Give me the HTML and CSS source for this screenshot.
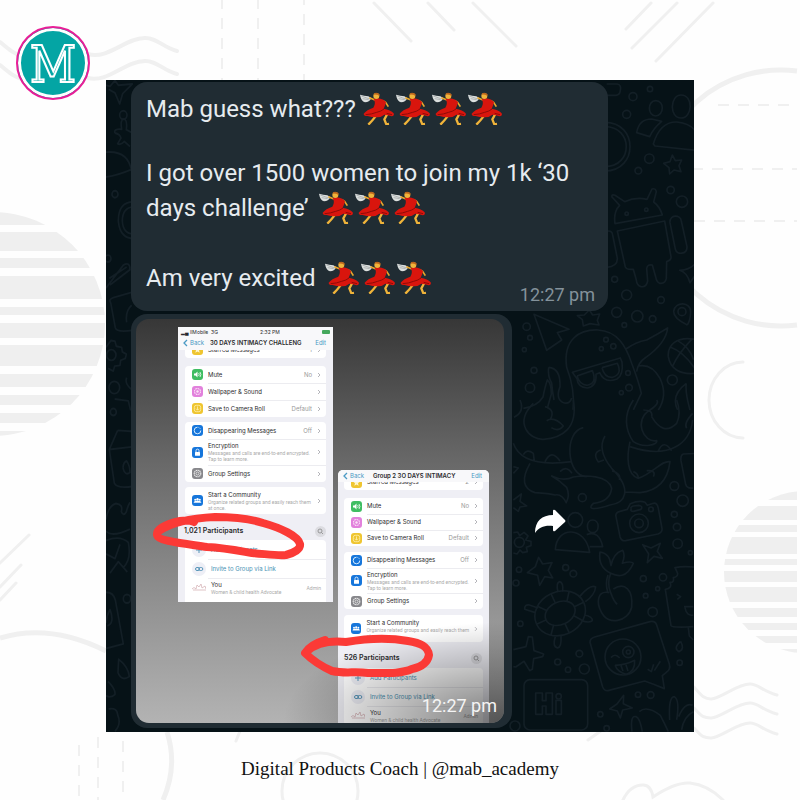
FILE: index.html
```html
<!DOCTYPE html>
<html lang="en">
<head>
<meta charset="utf-8">
<meta name="viewport" content="width=device-width, initial-scale=1">
<title>Digital Products Coach</title>
<link rel="stylesheet" href="styles.css">
</head>
<body>
<svg class="symbols" aria-hidden="true">
  <symbol id="dancer" viewBox="56 38 108 99">
    <path d="M59 46 Q72 50 84 51 L93 56 Q87 69 74 69 Q62 65 59 46Z" fill="#dce0df"/>
    <path d="M63 50 L88 59 M67 58 L85 61" stroke="#9a9f9f" stroke-width="2"/>
    <path d="M87 55 L104 62 M128 64 L136 69 L144 82" fill="none" stroke="#e9a82c" stroke-width="5" stroke-linejoin="round"/>
    <path d="M108 108 Q96 124 84 136 M141 104 L132 120 L138 135 L146 134" fill="none" stroke="#f0b43a" stroke-width="7" stroke-linejoin="round"/>
    <path d="M100 59 Q114 53 129 61 L137 68 Q135 79 130 88 Q151 91 160 102 Q163 110 154 111 Q142 107 132 106 Q121 115 108 114 Q92 114 82 110 Q70 111 70 103 Q79 91 99 85 Q108 72 100 59Z" fill="#d9150d"/>
    <path d="M76 106 Q94 105 109 99 Q123 96 131 89 M139 102 L155 106" fill="none" stroke="#8f0b08" stroke-width="3"/>
    <circle cx="108" cy="50" r="9" fill="#f1b43b"/>
    <path d="M100 43 Q109 37 118 45 L117 50 Q111 45 101 46Z" fill="#bb641b"/>
  </symbol>
  <symbol id="chevron" viewBox="0 0 4 6"><path d="M1 1 L3 3 L1 5" fill="none" stroke="currentColor"/></symbol>
  <symbol id="back" viewBox="0 0 6 8"><path d="M5 1 L2 4 L5 7" fill="none" stroke="currentColor" stroke-width="1.3"/></symbol>
  <symbol id="star" viewBox="0 0 11 11"><path d="M5.5 2 L6.5 4.4 L9 4.5 L7 6.2 L7.7 8.8 L5.5 7.4 L3.3 8.8 L4 6.2 L2 4.5 L4.5 4.4Z" fill="#fff6c9"/></symbol>
  <symbol id="mute" viewBox="0 0 11 11"><path d="M2 4.5 H3.5 L5.5 2.5 V8.5 L3.5 6.5 H2Z" fill="#fff"/><path d="M6.7 4 Q7.7 5.5 6.7 7 M8 3 Q9.8 5.5 8 8" fill="none" stroke="#fff" stroke-width=".8"/></symbol>
  <symbol id="flower" viewBox="0 0 11 11"><circle cx="5.5" cy="5.5" r="3" fill="none" stroke="#fbe2f7" stroke-width="1.1" stroke-dasharray="1.6 .7"/><circle cx="5.5" cy="5.5" r="1.2" fill="#fbe2f7"/></symbol>
  <symbol id="save" viewBox="0 0 11 11"><rect x="2.3" y="2.3" width="6.4" height="6.4" rx="2" fill="none" stroke="#fff1b0" stroke-width=".8"/><path d="M5.5 3.5 V7 M4 5.7 L5.5 7.2 L7 5.7" fill="none" stroke="#fff1b0" stroke-width=".8"/></symbol>
  <symbol id="timer" viewBox="0 0 11 11"><path d="M5.5 2.2 A3.3 3.3 0 1 0 8.8 5.5" fill="none" stroke="#d5ecff"/><path d="M6.5 2.4 A3.3 3.3 0 0 1 8.7 4.5" fill="none" stroke="#d5ecff" stroke-dasharray=".8 .7"/></symbol>
  <symbol id="lock" viewBox="0 0 11 11"><rect x="3" y="5" width="5" height="3.8" rx=".6" fill="#fff"/><path d="M4 5 V3.6 A1.5 1.5 0 0 1 7 3.6 V5" fill="none" stroke="#fff" stroke-width=".8"/></symbol>
  <symbol id="cog" viewBox="0 0 11 11"><circle cx="5.5" cy="5.5" r="3.3" fill="none" stroke="#eee" stroke-width="1.1" stroke-dasharray="1.4 .5"/><circle cx="5.5" cy="5.5" r="1.5" fill="none" stroke="#eee" stroke-width=".8"/></symbol>
  <symbol id="people" viewBox="0 0 11 11"><circle cx="3.2" cy="4.7" r="1" fill="#fff"/><circle cx="5.5" cy="4.3" r="1.2" fill="#fff"/><circle cx="7.8" cy="4.7" r="1" fill="#fff"/><path d="M1.6 7.7 Q2 5.8 3.4 5.9 Q5.5 5 7.6 5.9 Q9 5.8 9.4 7.7Z" fill="#fff"/></symbol>
  <symbol id="search" viewBox="0 0 11 11"><circle cx="5" cy="5" r="2" fill="none" stroke="#888" stroke-width=".8"/><path d="M6.5 6.5 L8 8" stroke="#888" stroke-width=".8"/></symbol>
  <symbol id="plus" viewBox="0 0 14 14"><path d="M7 4 V10 M4 7 H10" stroke="#5795b8"/></symbol>
  <symbol id="link" viewBox="0 0 14 14"><rect x="3.5" y="5.5" width="4" height="3" rx="1.5" fill="none" stroke="#5795b8"/><rect x="6.8" y="5.5" width="4" height="3" rx="1.5" fill="none" stroke="#5795b8"/></symbol>
  <symbol id="avatar" viewBox="0 0 14 14"><path d="M0 8 Q2 5 4 8 M4 8 L5 4 L7 6 L9 3 L10 7 L13 5 L14 8 M1 9 H14" fill="none" stroke="#d7b4b8" stroke-width=".8"/></symbol>
</svg>

<svg class="backdrop" viewBox="0 0 800 800" preserveAspectRatio="xMidYMin slice" aria-hidden="true">
  <defs>
    <clipPath id="sun-left"><circle cx="-7" cy="324" r="112"/></clipPath>
    <clipPath id="sun-right"><circle cx="805" cy="572" r="81"/></clipPath>
  </defs>
  <g clip-path="url(#sun-left)" class="fill">
    <path d="M0 211H110V225H0ZM0 232H110V251H0ZM0 258H110V268H0ZM0 276H110V299H0ZM0 307H110V315H0ZM0 323H110V338H0ZM0 345H110V366H0ZM0 374H110V387H0ZM0 395H110V405H0ZM0 413H110V423H0ZM0 431H110V437H0Z"/>
  </g>
  <g clip-path="url(#sun-right)" class="fill">
    <path d="M720 491H797V500H720ZM720 506H797V520H720ZM720 525H797V532H720ZM720 537H797V554H720ZM720 559H797V565H720ZM720 571H797V582H720ZM720 587H797V602H720ZM720 608H797V617H720ZM720 623H797V630H720ZM720 636H797V643H720ZM720 649H797V653H720Z"/>
  </g>
  <g class="thick">
    <path d="M0 42C10 50 14 54 22 56M0 65C10 73 14 77 22 79M88 54C108 60 125 38 145 38C158 38 162 47 177 51M88 78C108 83 125 61 145 61C158 61 162 70 177 74"/>
    <path class="heavy" d="M797 71A128 128 0 1 0 797 325"/>
    <path class="heavy" d="M0 638Q50 623 106 651M167 732Q178 766 163 800"/>
  </g>
  <g class="thin">
    <path d="M374 3L411 41M428 3L454 30M473 3L516 46M651 3L626 29M677 3L632 48M713 3L656 61"/>
    <path d="M743 362A34 38 0 0 0 743 438M29 535L0 563M21 565L0 587M16 583L0 600"/>
    <path d="M694 687C702 696 704 699 711 699C722 698 737 684 750 684C759 684 763 692 777 695M694 708C702 717 704 718 711 718C722 717 737 703 750 703C759 703 763 711 777 714M694 728C702 737 704 738 711 738C722 737 737 723 750 723C759 723 763 731 777 734"/>
    <path d="M623 800Q630 785 643 785Q651 785 653 797Q675 782 690 783Q708 785 723 800M588 740L605 728M236 741L240 731"/>
    <circle cx="320" cy="791" r="38"/>
  </g>
  <path class="dashes" d="M222 -2V80M258 -2V80M304 -6V80M718 105H797M692 169H797M694 221H797M79 745V800M98 737V800M123 741V800"/>
</svg>

<header class="top">
  <div class="logo"><span>M</span></div>
</header>

<main class="chat">
  <svg class="doodles" viewBox="106 80 588 652" preserveAspectRatio="xMaxYMin slice" aria-hidden="true">
    <g transform="translate(510 80) scale(.3333)">
      <circle cx="369" cy="50" r="12"/><circle cx="420" cy="27" r="8"/><circle cx="350" cy="103" r="12"/><circle cx="418" cy="236" r="14"/><circle cx="385" cy="272" r="10"/><circle cx="482" cy="330" r="11"/><circle cx="516" cy="365" r="17"/>
      <path d="M290 12H322Q335 15 331 31Q330 44 318 46H290"/>
      <path d="M437 62C465 62 462 108 437 108C412 108 412 62 437 62M513 45C551 45 548 114 513 114C477 114 480 45 513 45M380 158Q387 117 425 117L455 124Q430 145 419 170ZM430 192Q450 125 500 126Q545 130 560 160V211L435 198Z"/>
      <path d="M285 140C370 140 370 260 285 260M285 127C385 127 385 273 285 273"/>
      <path d="M487 225L496 242L515 240L507 257L513 275L492 270L479 282L477 263L461 250L480 245Z"/>
      <path d="M315 431Q310 395 329 376L306 351Q304 342 315 346L344 365Q377 350 411 358L426 327Q437 324 439 335L431 366Q450 380 457 405ZM322 453L464 423L483 530Q485 540 470 545L469 596Q465 612 450 610Q440 608 437 590L427 555Q412 552 410 566L413 603Q409 623 393 620Q380 616 379 600L370 568Q350 570 346 561ZM480 428C478 403 511 403 514 423L531 500C532 524 500 526 496 507ZM290 454Q306 450 308 465L322 535Q323 560 290 562"/>
      <circle cx="350" cy="401" r="5"/><circle cx="409" cy="389" r="5"/>
      <path d="M560 545Q544 569 509 571Q531 577 540 608L560 580"/>
      <circle cx="314" cy="598" r="9"/><circle cx="350" cy="645" r="15"/><circle cx="453" cy="660" r="10"/><circle cx="320" cy="697" r="15"/><circle cx="382" cy="709" r="17"/><circle cx="428" cy="717" r="10"/><circle cx="343" cy="735" r="7"/><circle cx="516" cy="695" r="12"/>
      <path d="M532 735Q490 715 491 694C494 663 544 665 542 697Q541 722 532 735M72 703L177 748L142 758L155 780L110 811ZM238 690L248 705L269 702L262 721L267 735L240 731L220 738L217 719L202 707L223 705Z"/>
      <circle cx="50" cy="740" r="11"/><circle cx="60" cy="773" r="7"/><circle cx="43" cy="809" r="6"/><circle cx="72" cy="871" r="9"/><circle cx="60" cy="923" r="14"/><circle cx="487" cy="900" r="15"/><circle cx="288" cy="779" r="7"/><circle cx="310" cy="799" r="8"/><circle cx="274" cy="806" r="6"/><circle cx="354" cy="879" r="7"/><circle cx="357" cy="923" r="10"/><circle cx="334" cy="938" r="6"/>
      <path d="M189 990Q196 930 170 862C158 777 210 748 264 750C322 753 348 798 365 850Q386 905 394 940L370 990M187 877L331 834L336 846Q341 885 321 897Q284 912 269 878L258 883Q261 920 232 924Q203 922 201 896ZM201 888L247 872Q263 909 232 916Q208 914 201 888M276 863L322 850Q338 883 308 892Q283 894 276 863M348 807Q377 786 410 780Q444 762 473 744Q468 789 408 832Q384 848 380 875M385 858Q425 850 450 895Q474 945 445 990M116 862Q152 864 150 920Q135 960 163 969Q180 972 185 954M116 862Q112 887 125 909Q127 934 132 960M40 985Q82 979 99 951Q105 920 112 900Q124 911 124 942L112 985"/>
      <path d="M555 778C500 768 472 795 475 830C480 865 510 885 555 880M482 802Q520 815 555 866M503 782Q540 803 551 840M488 858Q505 820 545 778M529 910Q481 946 503 990M529 910Q525 936 540 990"/>
    </g>
    <g transform="translate(510 400) scale(.3333)">
      <path d="M70 10C10 70 60 120 100 118C155 115 205 85 190 0M30 0Q45 35 12 52M105 20Q138 30 120 60M110 62Q133 48 160 78Q145 97 124 83M10 130Q35 205 185 185M40 164Q50 145 70 160L73 184M105 185Q124 145 150 183M60 190Q20 260 75 278Q120 281 135 285Q155 280 170 310M220 83C160 95 170 230 230 230M285 108Q260 150 305 205C370 270 345 310 300 315C270 325 225 335 250 310Q300 305 305 265C295 225 225 225 190 231Q160 245 125 228Q150 242 170 262Q180 285 170 305M150 215Q170 195 186 220M272 150Q246 159 265 186L282 180M306 213Q335 220 328 240M370 0C340 45 345 90 370 125C400 145 445 135 440 122C400 130 370 60 420 30Q450 10 440 0M400 30Q430 30 425 50M425 50Q460 110 500 70Q515 40 500 0M360 125C350 170 350 225 385 235C430 220 455 180 480 185Q470 270 390 278L345 276M370 215Q385 220 385 236M410 212Q440 210 430 230M360 140C480 180 540 130 548 60M444 155Q460 115 485 152M548 40Q520 70 530 85"/>
      <path d="M560 160L520 162Q511 165 513 182L527 253Q531 267 550 264M10 300L34 282L30 304L50 318L30 321L25 334L10 323M10 200L25 204L10 220"/>
      <circle cx="217" cy="293" r="12"/><circle cx="493" cy="258" r="13"/><circle cx="518" cy="302" r="17"/><circle cx="493" cy="343" r="9"/><circle cx="501" cy="381" r="11"/><circle cx="503" cy="431" r="14"/>
      <path d="M318 350Q315 338 330 334L352 328L361 311Q388 300 405 307L412 316L430 310Q442 307 445 325L456 385Q458 397 444 402L347 422Q334 424 330 410ZM364 326Q360 321 370 318L386 316Q400 318 393 328L370 334Q360 334 364 326"/>
      <circle cx="387" cy="370" r="28"/><circle cx="387" cy="370" r="13"/><circle cx="423" cy="328" r="7"/>
      <circle cx="196" cy="360" r="22"/><path d="M136 449C140 377 226 377 239 457ZM248 360C270 360 270 398 248 398C227 398 227 360 248 360M230 404Q268 390 278 440L239 440"/>
      <path d="M10 398L23 396L29 407L42 397L54 408L47 420L63 424V437L49 442L52 455L38 458L30 450L21 462L10 459"/><circle cx="28" cy="427" r="15"/>
      <path d="M302 520C260 500 270 460 270 456Q300 460 303 497Q310 460 338 451Q347 465 337 490Q364 482 370 490C350 535 323 530 302 520Q290 550 302 578Q313 608 322 613M298 578C260 570 260 610 273 634C293 680 355 665 365 622C370 570 345 545 310 567M294 525Q285 550 293 575"/>
      <path d="M398 434L423 444L451 430L442 454L457 475L432 469L412 488L416 462ZM86 472L98 492L126 488L115 511L128 534L104 530L89 556L83 526L52 518L76 500Z"/>
      <circle cx="167" cy="503" r="9"/><circle cx="190" cy="521" r="10"/><circle cx="27" cy="509" r="8"/><circle cx="18" cy="549" r="9"/><circle cx="400" cy="536" r="9"/><circle cx="459" cy="532" r="11"/><circle cx="443" cy="566" r="6"/><circle cx="407" cy="587" r="7"/><circle cx="428" cy="636" r="14"/><circle cx="31" cy="671" r="8"/><circle cx="541" cy="458" r="6"/>
      <g transform="rotate(-25 150 639)"><ellipse cx="150" cy="640" rx="78" ry="65"/><ellipse cx="150" cy="640" rx="47" ry="34"/><path d="M72 640H103M197 640H228M150 575V606M150 674V705M97 592L118 617M202 592L183 617M97 688L118 663M202 688L183 663"/></g>
      <path d="M144 577Q137 548 149 545Q161 548 158 575M209 590Q240 552 257 561Q254 586 226 605M76 638L44 628Q43 613 58 615L84 624M222 645Q249 650 247 662Q238 670 214 662M136 710Q126 740 143 744Q155 742 153 708"/>
      <path d="M560 502Q520 497 495 503L503 520Q504 531 490 533Q493 549 480 547Q488 565 466 568L483 677Q486 684 550 680M500 583L512 590L502 598M522 620H550M525 623Q530 650 550 645M535 683L538 708L550 720"/>
      <path d="M240 727Q240 715 254 711L420 665Q436 662 440 675L478 792Q483 808 469 817L457 827L463 866Q430 852 404 843L294 872Q283 873 278 861Z"/><circle cx="339" cy="771" r="54"/><circle cx="355" cy="756" r="17"/><circle cx="355" cy="756" r="6"/><path d="M303 773Q315 758 329 774M315 796Q348 795 374 781Q376 814 349 823Q323 817 315 796M333 797L339 813M348 795L354 813M413 808L424 815L431 793M433 812L451 784"/>
      <path d="M10 749Q30 744 48 740L55 710L67 711L72 752L101 762L98 770L71 776L67 808L59 812L42 784L17 801L10 800"/>
      <circle cx="208" cy="761" r="10"/><circle cx="143" cy="786" r="9"/><circle cx="174" cy="809" r="8"/><circle cx="223" cy="807" r="15"/><circle cx="509" cy="788" r="8"/><path d="M512 724Q525 748 507 755Q488 745 512 724"/>
      <rect x="42" y="839" width="191" height="151" rx="18"/><path d="M77 879H97V902H108V879H127V943H108V918H97V943H77ZM138 901H154V943H138Z"/><circle cx="146" cy="889" r="8"/>
      <circle cx="384" cy="884" r="8"/><circle cx="422" cy="885" r="10"/><circle cx="271" cy="943" r="8"/><circle cx="290" cy="985" r="8"/><circle cx="15" cy="978" r="15"/><path d="M341 886L340 911L367 924L338 930L331 954L322 933L299 927L321 912ZM366 995Q360 945 378 950Q390 954 397 995M388 935Q410 915 451 946Q461 965 475 995M479 960Q475 890 493 890Q510 900 500 960M506 950Q525 905 548 916M515 990Q520 950 550 935"/>
    </g>
    <g transform="translate(0 200) scale(.3333 .3827)">
      <path d="M318 -300L330 -297L345 -312L355 -300L397 -303L368 -278L359 -251L345 -280L326 -289"/>
      <path d="M345 -175Q340 -187 365 -185Q360 -210 371 -212Q383 -210 379 -184L398 -175M345 -175Q360 -172 363 -162L353 -147Q362 -142 373 -153L390 -140M318 -125Q385 -130 395 -75M318 -60Q355 -65 395 -80"/>
      <circle cx="370" cy="-222" r="11"/><circle cx="345" cy="-15" r="9"/>
      <path d="M400 5Q355 5 355 55Q360 105 410 100M400 18Q367 20 367 55Q369 88 400 89M318 230L370 170Q390 160 390 182L330 222M328 205L380 175M332 268Q325 260 340 255L400 240M332 268L346 334Q350 347 400 340M380 320Q375 290 395 275"/>
      <path d="M318 385L333 367L345 369L349 382L365 385L367 397L379 403L376 414L362 419L360 432L344 434L340 447L324 440"/><circle cx="334" cy="405" r="14"/><circle cx="343" cy="490" r="16"/><circle cx="340" cy="554" r="9"/><circle cx="324" cy="153" r="9"/>
      <path d="M344 520L385 525L392 550M380 464Q373 480 395 495M353 602L328 652L343 740Q350 755 400 748M328 652L395 645M353 602L400 605M369 700Q370 685 380 682Q390 695 390 712Q375 722 369 700M318 835Q325 798 348 793Q370 795 364 814Q370 828 379 815Q383 800 390 790M318 865Q335 883 390 860M318 890Q360 875 385 895Q395 940 370 960M318 925L345 937L360 900M330 975L355 945L382 972M318 1025Q340 1025 346 1045L370 1160L318 1172M318 1105Q320 1085 330 1070Q345 1105 322 1113M356 1200Q385 1220 388 1245Q365 1259 354 1235ZM324 1258Q347 1277 345 1292Q330 1303 318 1295M326 1330Q351 1325 353 1345Q365 1370 345 1388"/><circle cx="381" cy="1042" r="11"/>
    </g>
  </svg>

  <article class="bubble message">
    <p class="greeting">Mab guess what???<svg class="dancer"><use href="#dancer"/></svg><svg class="dancer"><use href="#dancer"/></svg><svg class="dancer"><use href="#dancer"/></svg><svg class="dancer"><use href="#dancer"/></svg></p>
    <p class="news">I got over 1500 women to join my 1k ‘30 days challenge’ <svg class="dancer"><use href="#dancer"/></svg><svg class="dancer"><use href="#dancer"/></svg><svg class="dancer"><use href="#dancer"/></svg></p>
    <div class="closing">
      <p>Am very excited <svg class="dancer"><use href="#dancer"/></svg><svg class="dancer"><use href="#dancer"/></svg><svg class="dancer"><use href="#dancer"/></svg></p>
      <time>12:27 pm</time>
    </div>
  </article>

  <div class="media-row">
    <article class="bubble media">
      <div class="photo">
        <section class="phone first">
          <div class="status"><span>▂▄ llMobile&nbsp; 3G</span><span>2:32 PM</span><i class="battery"></i></div>
          <div class="nav"><a href="#"><svg class="back"><use href="#back"/></svg>Back</a><b>30 DAYS INTIMACY CHALLENG</b><a href="#">Edit</a></div>
          <div class="card clipped"><div class="row"><svg class="icon yellow"><use href="#star"/></svg><span class="label">Starred Messages</span><span>1</span><svg class="chevron"><use href="#chevron"/></svg></div></div>
          <div class="card">
            <div class="row"><svg class="icon green"><use href="#mute"/></svg><span class="label">Mute</span><span>No</span><svg class="chevron"><use href="#chevron"/></svg></div>
            <div class="row"><svg class="icon pink"><use href="#flower"/></svg><span class="label">Wallpaper &amp; Sound</span><svg class="chevron"><use href="#chevron"/></svg></div>
            <div class="row"><svg class="icon yellow"><use href="#save"/></svg><span class="label">Save to Camera Roll</span><span>Default</span><svg class="chevron"><use href="#chevron"/></svg></div>
          </div>
          <div class="card">
            <div class="row"><svg class="icon blue"><use href="#timer"/></svg><span class="label">Disappearing Messages</span><span>Off</span><svg class="chevron"><use href="#chevron"/></svg></div>
            <div class="row tall"><svg class="icon blue"><use href="#lock"/></svg><span class="label">Encryption<small>Messages and calls are end-to-end encrypted.<br>Tap to learn more.</small></span><svg class="chevron"><use href="#chevron"/></svg></div>
            <div class="row"><svg class="icon grey"><use href="#cog"/></svg><span class="label">Group Settings</span><svg class="chevron"><use href="#chevron"/></svg></div>
          </div>
          <div class="card community">
            <div class="row tall"><svg class="icon blue"><use href="#people"/></svg><span class="label">Start a Community<small>Organize related groups and easily reach them<br>at once.</small></span><svg class="chevron"><use href="#chevron"/></svg></div>
          </div>
          <div class="count"><b>1,021 Participants</b><svg class="find"><use href="#search"/></svg></div>
          <div class="card people">
            <div class="row"><svg class="round"><use href="#plus"/></svg><a class="label" href="#">Add Participants</a></div>
            <div class="row"><svg class="round"><use href="#link"/></svg><a class="label" href="#">Invite to Group via Link</a></div>
            <div class="row"><svg class="avatar"><use href="#avatar"/></svg><span class="label">You<small>Women &amp; child health Advocate</small></span><small>Admin</small></div>
          </div>
        </section>
        <section class="phone second">
          <div class="nav"><a href="#"><svg class="back"><use href="#back"/></svg>Back</a><b>Group 2 3O DAYS INTIMACY</b><a href="#">Edit</a></div>
          <div class="card clipped"><div class="row"><svg class="icon yellow"><use href="#star"/></svg><span class="label">Starred Messages</span><span>2</span><svg class="chevron"><use href="#chevron"/></svg></div></div>
          <div class="card">
            <div class="row"><svg class="icon green"><use href="#mute"/></svg><span class="label">Mute</span><span>No</span><svg class="chevron"><use href="#chevron"/></svg></div>
            <div class="row"><svg class="icon pink"><use href="#flower"/></svg><span class="label">Wallpaper &amp; Sound</span><svg class="chevron"><use href="#chevron"/></svg></div>
            <div class="row"><svg class="icon yellow"><use href="#save"/></svg><span class="label">Save to Camera Roll</span><span>Default</span><svg class="chevron"><use href="#chevron"/></svg></div>
          </div>
          <div class="card">
            <div class="row"><svg class="icon blue"><use href="#timer"/></svg><span class="label">Disappearing Messages</span><span>Off</span><svg class="chevron"><use href="#chevron"/></svg></div>
            <div class="row tall"><svg class="icon blue"><use href="#lock"/></svg><span class="label">Encryption<small>Messages and calls are end-to-end encrypted.<br>Tap to learn more.</small></span><svg class="chevron"><use href="#chevron"/></svg></div>
            <div class="row"><svg class="icon grey"><use href="#cog"/></svg><span class="label">Group Settings</span><svg class="chevron"><use href="#chevron"/></svg></div>
          </div>
          <div class="card community">
            <div class="row tall"><svg class="icon blue"><use href="#people"/></svg><span class="label">Start a Community<small>Organize related groups and easily reach them<br>at once.</small></span><svg class="chevron"><use href="#chevron"/></svg></div>
          </div>
          <div class="count"><b>526 Participants</b><svg class="find"><use href="#search"/></svg></div>
          <div class="card people">
            <div class="row"><svg class="round"><use href="#plus"/></svg><a class="label" href="#">Add Participants</a></div>
            <div class="row"><svg class="round"><use href="#link"/></svg><a class="label" href="#">Invite to Group via Link</a></div>
            <div class="row"><svg class="avatar"><use href="#avatar"/></svg><span class="label">You<small>Women &amp; child health Advocate</small></span><small>Admin</small></div>
          </div>
        </section>
        <svg class="marks" viewBox="136 319 368 404" aria-hidden="true">
          <path d="M194 522C190 520 186 520 180 521C167 524 156 529 157 535C158 541 180 543 207 547C226 548 240 551 252 553C266 554 278 556 286 555C294 553 301 549 300 544C298 536 281 528 263 523C248 518 228 517 215 517C195 518 172 522 159 531"/>
          <path d="M325 640C315 643 308 648 305 653C312 660 323 667 332 671C346 674 354 671 368 673C386 673 401 674 412 669C423 667 428 661 429 655C428 646 420 643 408 641C392 638 369 638 346 642C336 641 318 641 306 652"/>
        </svg>
        <time>12:27 pm</time>
      </div>
    </article>
    <button class="forward" type="button" aria-label="Forward">
      <svg viewBox="0 0 32 25"><path d="M1 24C1 12 8 6 19 6V2Q19 0 21 1L31 11Q32 12 31 13L21 22Q19 23 19 21V17C11 16 5 18 1 24Z" fill="#fff"/></svg>
    </button>
  </div>
</main>

<footer>Digital Products Coach | @mab_academy</footer>
</body>
</html>
```

FILE: styles.css
```css
* { box-sizing: border-box; }

body {
  margin: 0;
  min-height: 100vh;
  position: relative;
  overflow-x: hidden;
  background: #fefefe;
  font-family: Roboto, "Liberation Sans", sans-serif;
}

p { margin: 0; }
a { color: #4a9ac4; text-decoration: none; }

.symbols { position: absolute; width: 0; height: 0; }

.backdrop {
  position: absolute;
  inset: 0;
  width: 100%;
  height: 100%;
  z-index: -1;
  fill: none;
  stroke: #f0f0f0;
  stroke-linecap: round;
}
.backdrop .fill { fill: #efefef; stroke: none; }
.backdrop .thick { stroke-width: 4; }
.backdrop .heavy { stroke-width: 5; stroke-linecap: butt; }
.backdrop .thin { stroke-width: 3; }
.backdrop .dashes { stroke-width: 2; stroke-dasharray: 11 9; stroke-linecap: butt; }

.top { padding: 26px 16px 0; }

.logo {
  display: grid;
  place-items: center;
  width: 74px;
  height: 74px;
  padding-top: 4px;
  border: 2px solid #e81e97;
  border-radius: 50%;
  background: #04a5a4;
  box-shadow: inset 0 0 0 3px #fff;
}
.logo span {
  font: 50px/60px "DejaVu Serif Condensed", "DejaVu Serif", serif;
  color: #04a5a4;
  -webkit-text-stroke: 2px #fff;
}

.chat {
  position: relative;
  isolation: isolate;
  display: flex;
  flex-direction: column;
  align-items: flex-start;
  gap: 3px;
  margin: -20px 106px 0;
  padding: 2px 25px 4px;
  background: #061217;
  overflow: hidden;
}

.doodles {
  position: absolute;
  inset: 0;
  width: 100%;
  height: 100%;
  z-index: -1;
  fill: none;
  stroke: #131f26;
  stroke-width: 5;
  stroke-linejoin: round;
}

.bubble { background: #202c33; border-radius: 16px; }

.message {
  max-width: 477px;
  padding: 10px 13px 4px 15px;
  color: #e6ebef;
  font-size: 24px;
  line-height: 35px;
}
.greeting { margin-bottom: 29px; }
.news { margin-bottom: 35px; }
.dancer { width: 36px; height: 33px; vertical-align: -8px; }
.message .dancer:first-child { margin-left: 3px; }
.closing { display: flex; justify-content: space-between; align-items: flex-end; }
.closing p { padding-bottom: 11px; }
time { font-size: 18px; line-height: 24px; color: #84929b; }

.media-row { display: flex; align-items: center; gap: 22px; }
.media { padding: 5px 8px 5px 5px; }

.photo {
  position: relative;
  display: grid;
  grid-template-columns: 155px 151px;
  align-items: start;
  gap: 5px;
  max-height: 404px;
  padding: 8px 15px 0 42px;
  border-radius: 13px;
  overflow: hidden;
  background: linear-gradient(#373737, #686868 35%, #919191 70%, #b3b3b3);
}
.photo::after {
  content: "";
  position: absolute;
  inset: 75% 0 0 40%;
  background: radial-gradient(100% 100% at 100% 100%, #0008, #0000);
}
.photo time { position: absolute; right: 7px; bottom: 5px; z-index: 2; color: #f4f4f4; }
.marks {
  position: absolute;
  inset: 0;
  width: 100%;
  height: 100%;
  z-index: 1;
  fill: none;
  stroke: #fb3a36;
  stroke-width: 8;
  stroke-linecap: round;
  stroke-linejoin: round;
}

.phone {
  --row: 17px;
  --tall: 26px;
  display: flex;
  flex-direction: column;
  gap: 5px;
  overflow: hidden;
  background: #efeff5;
  color: #2a2a2c;
  font-family: Inter, "Liberation Sans", sans-serif;
  font-size: 6px;
  line-height: 8px;
}
.second { --row: 16px; --tall: 25px; gap: 6px; margin-top: 143px; border-radius: 5px 5px 0 0; }

.status {
  display: flex;
  justify-content: space-between;
  align-items: center;
  height: 9px;
  margin-bottom: -5px;
  padding: 0 3px;
  background: #f8f8fa;
  font-size: 5px;
}
.battery { width: 8px; height: 4px; border-radius: 1px; background: #45a85c; }

.nav {
  display: flex;
  align-items: center;
  gap: 6px;
  height: 14px;
  padding: 0 7px 0 4px;
  background: #f8f8fa;
}
.second .nav { gap: 9px; height: 12px; }
.nav b { flex: 1; font-weight: 600; white-space: nowrap; }
.nav a { display: flex; align-items: center; gap: 2px; }
.back { width: 6px; height: 8px; }

.card { margin: 0 7px; border-radius: 4px; background: #fff; overflow: hidden; }
.second .card { margin: 0 6px; }
.phone .clipped { display: flex; flex-direction: column; justify-content: flex-end; height: 8px; margin-top: -5px; margin-bottom: 3px; border-radius: 0 0 4px 4px; }
.second .clipped { margin-top: -6px; margin-bottom: 2px; }
.clipped .row { flex-shrink: 0; }

.row { display: flex; align-items: center; gap: 5px; height: var(--row); padding: 0 5px 0 7px; color: #999; }
.row + .row { background: linear-gradient(#ececf0, #ececf0) 23px 0 / 100% 1px no-repeat; }
.tall { height: var(--tall); }
.community .tall { height: 27px; }
.label { flex: 1; color: #2a2a2c; white-space: nowrap; }
a.label { color: #4a92b4; }
small { display: block; font: 5px/6px Roboto, "Liberation Sans", sans-serif; color: #aaa; }
.icon { width: 11px; height: 11px; border-radius: 3px; }
.green { background: #3fbd62; }
.pink { background: #e281dc; }
.yellow { background: #efc530; }
.blue { background: #1676db; }
.grey { background: #87878b; }
.chevron { width: 4px; height: 6px; color: #b5b5ba; }

.count {
  display: flex;
  justify-content: space-between;
  align-items: center;
  flex-shrink: 0;
  height: 16px;
  margin: 4px 0 -4px;
  padding: 0 7px 0 6px;
  font-size: 7px;
}
.second .count { margin-top: 2px; }
.count b { font-weight: 600; }
.find { width: 11px; height: 11px; border-radius: 50%; background: #dcdce1; }
.people { flex-shrink: 0; }
.people .row { height: 19px; }
.first .people { height: 62px; border-radius: 4px 4px 0 0; }
.round { width: 14px; height: 14px; border-radius: 50%; background: #eeeff6; }
.avatar { width: 14px; height: 14px; }

.forward { width: 32px; height: 25px; padding: 0; border: 0; background: none; }
.forward svg { display: block; width: 32px; height: 25px; }

footer {
  padding: 24px 16px 19px;
  text-align: center;
  color: #111;
  font: 19px/25px "Liberation Serif", serif;
}
```
